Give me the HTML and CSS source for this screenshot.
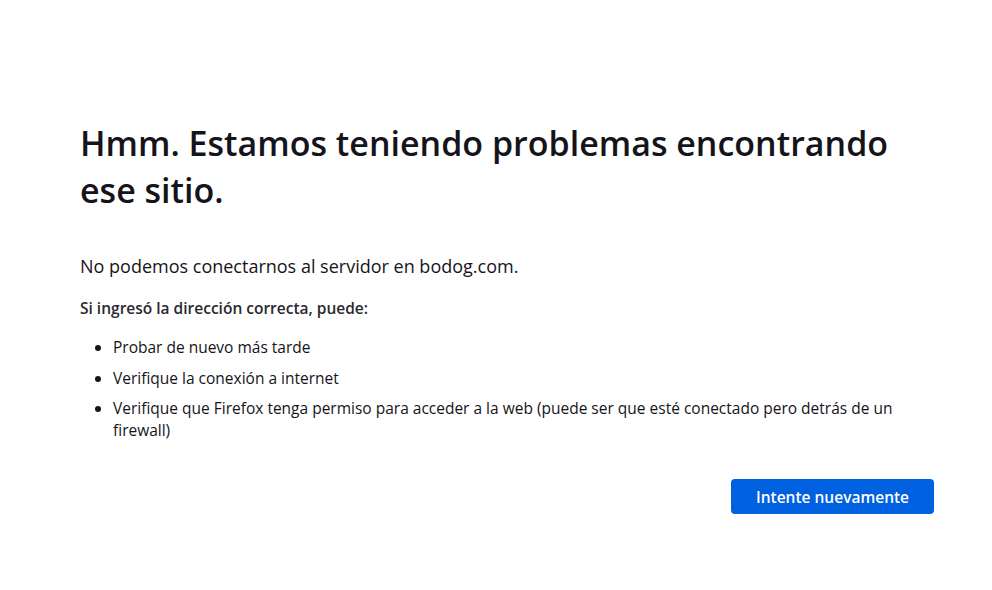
FILE: index.html
```html
<!DOCTYPE html>
<html lang="es">
<head>
<meta charset="utf-8">
<title>Problema al cargar la página</title>
<link rel="stylesheet" href="styles.css">
</head>
<body>
<main class="page">
  <div class="container">
    <h1 class="title">Hmm. Estamos teniendo problemas encontrando ese sitio.</h1>
    <p class="lead">No podemos conectarnos al servidor en bodog.com.</p>
    <p class="hint">Si ingresó la dirección correcta, puede:</p>
    <ul class="tips">
      <li>Probar de nuevo más tarde</li>
      <li>Verifique la conexión a internet</li>
      <li>Verifique que Firefox tenga permiso para acceder a la web (puede ser que esté conectado pero detrás de un firewall)</li>
    </ul>
    <div class="actions">
      <button class="retry">Intente nuevamente</button>
    </div>
  </div>
</main>
</body>
</html>
```

FILE: styles.css
```css
html, body {
  margin: 0;
  padding: 0;
  background: #ffffff;
}
body {
  font-family: "Open Sans", "Noto Sans", sans-serif;
  color: #15141a;
}
.page {
  padding: 120px 58px 0 80px;
}
.container {
  width: 854px;
}
.title {
  margin: 0;
  font-size: 34px;
  font-weight: 600;
  line-height: 47px;
}
.lead {
  margin: 40px 0 0;
  font-size: 18px;
  line-height: 24px;
}
.hint {
  margin: 19px 0 0;
  font-size: 15.5px;
  font-weight: 600;
  line-height: 22px;
  color: #2a2930;
}
.tips {
  margin: 17px 0 0;
  padding: 0 0 0 33px;
  font-size: 15.5px;
  line-height: 22px;
}
.tips li {
  margin-bottom: 8.5px;
}
.actions {
  display: flex;
  justify-content: flex-end;
  margin-top: 38px;
}
.retry {
  font-family: inherit;
  font-size: 15.5px;
  font-weight: 600;
  color: #ffffff;
  background: #0061e0;
  border: none;
  border-radius: 4px;
  width: 203px;
  height: 35px;
  padding: 0;
}
```
